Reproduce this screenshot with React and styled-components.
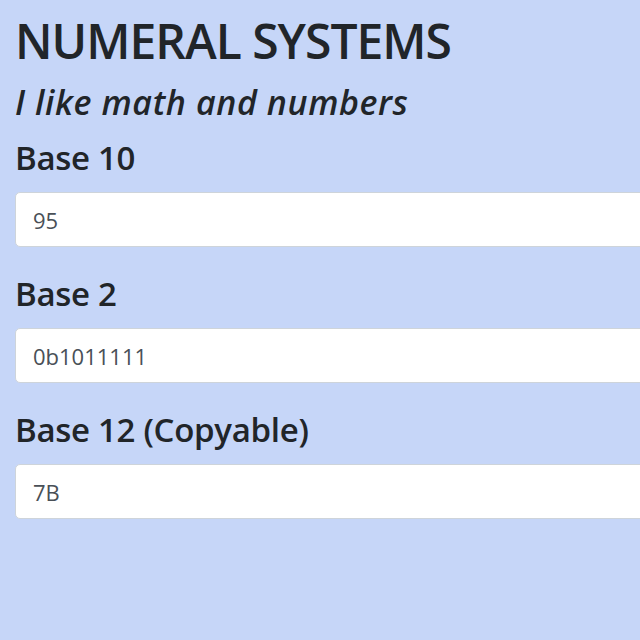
import React, { useState } from "react";
import styled, { createGlobalStyle } from "styled-components";

const GlobalStyle = createGlobalStyle`
  html, body {
    margin: 0;
    padding: 0;
    overflow: hidden;
    background-color: #c6d6f8;
  }
  * {
    box-sizing: border-box;
  }
`;

const Page = styled.div`
  min-height: 640px;
  padding: 11px 15px;
  font-family: "Open Sans", "Noto Sans", sans-serif;
  color: #212529;
`;

const Title = styled.h1`
  margin: 0;
  font-size: 48px;
  line-height: 60px;
  font-weight: 600;
  letter-spacing: -1px;
  white-space: nowrap;
`;

const Subtitle = styled.h2`
  margin: 11px 0 0;
  font-size: 34px;
  line-height: 40px;
  font-weight: 600;
  font-style: italic;
  letter-spacing: 0.6px;
  white-space: nowrap;
`;

const Field = styled.div`
  display: flex;
  flex-direction: column;
  gap: 13px;
  margin-top: ${(p) => (p.first ? "15px" : "26px")};
`;

const Label = styled.label`
  font-size: 33px;
  line-height: 42px;
  font-weight: 600;
  letter-spacing: -0.3px;
  white-space: nowrap;
`;

const Input = styled.input`
  display: block;
  width: 780px;
  height: 55px;
  padding: 0 17px;
  font-family: inherit;
  font-size: 22px;
  color: #495057;
  background: #fff;
  border: 1px solid #ced4da;
  border-radius: 5px;
  outline: none;
`;

const toBase = (n, b) => n.toString(b).toUpperCase();

export default function App() {
  const [value, setValue] = useState("95");
  const n = parseInt(value, 10) || 0;

  return (
    <>
      <GlobalStyle />
      <Page>
        <Title>NUMERAL SYSTEMS</Title>
        <Subtitle>I like math and numbers</Subtitle>
        <Field first>
          <Label>Base 10</Label>
          <Input value={value} onChange={(e) => setValue(e.target.value)} />
        </Field>
        <Field>
          <Label>Base 2</Label>
          <Input value={"0b" + n.toString(2)} readOnly />
        </Field>
        <Field>
          <Label>Base 12 (Copyable)</Label>
          <Input value={toBase(n, 12)} readOnly />
        </Field>
      </Page>
    </>
  );
}
